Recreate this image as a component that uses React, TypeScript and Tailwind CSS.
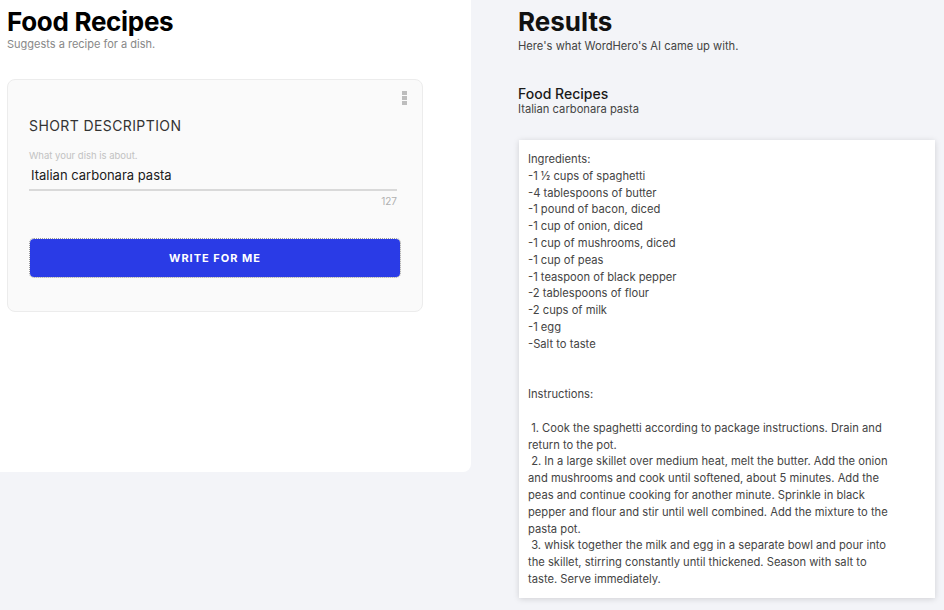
import React from "react";

const recipe = `Ingredients:
-1 ½ cups of spaghetti
-4 tablespoons of butter
-1 pound of bacon, diced
-1 cup of onion, diced
-1 cup of mushrooms, diced
-1 cup of peas
-1 teaspoon of black pepper
-2 tablespoons of flour
-2 cups of milk
-1 egg
-Salt to taste


Instructions:

 1. Cook the spaghetti according to package instructions. Drain and return to the pot.
 2. In a large skillet over medium heat, melt the butter. Add the onion and mushrooms and cook until softened, about 5 minutes. Add the peas and continue cooking for another minute. Sprinkle in black pepper and flour and stir until well combined. Add the mixture to the pasta pot.
 3. whisk together the milk and egg in a separate bowl and pour into the skillet, stirring constantly until thickened. Season with salt to taste. Serve immediately.`;

export default function App() {
  return (
    <div className="w-[944px] h-[610px] overflow-hidden bg-[#f3f4f8] flex font-['Inter',sans-serif]">
      {/* left panel */}
      <div className="w-[471px] h-[472px] bg-white rounded-br-lg shrink-0">
        <div className="pl-[7px] pt-[7px]">
          <h1 className="text-[26px] leading-[30px] font-bold text-black tracking-[-0.3px]">Food Recipes</h1>
          <p className="text-[11px] leading-[14px] text-[#888]">Suggests a recipe for a dish.</p>
        </div>

        <div className="ml-[7px] mt-[28px] w-[416px] h-[233px] bg-[#fafafa] border border-[#ececec] rounded-lg relative">
          <div className="absolute right-[15px] top-[11px] flex flex-col gap-[1px]">
            <span className="w-[5px] h-[4px] bg-[#bdbdbd]" />
            <span className="w-[5px] h-[4px] bg-[#bdbdbd]" />
            <span className="w-[5px] h-[4px] bg-[#bdbdbd]" />
          </div>

          <div className="pl-[21px] pr-[25px] pt-[38px]">
            <h2 className="text-[14px] leading-[16px] text-[#333] tracking-[0.4px]">SHORT DESCRIPTION</h2>
            <div className="mt-[16px] text-[9.5px] leading-[12px] text-[#c2c2c2]">What your dish is about.</div>
            <div className="mt-[5px] pl-[2px] text-[13px] leading-[16px] text-[#1a1a1a]">Italian carbonara pasta</div>
            <div className="mt-[6px] h-[2px] bg-[#d9d9d9]" />
            <div className="mt-[4px] text-right text-[10px] leading-[12px] text-[#b0b0b0]">127</div>
            <button className="mt-[32px] ml-[1px] w-[370px] h-[38px] bg-[#2a3be6] rounded-[4px] outline outline-1 outline-dotted outline-[#9a9a9a] text-white text-[11px] font-bold tracking-[1px]">
              WRITE FOR ME
            </button>
          </div>
        </div>
      </div>

      {/* right panel */}
      <div className="pl-[47px] pt-[7px] flex flex-col">
        <h1 className="text-[26px] leading-[30px] font-bold text-[#111]">Results</h1>
        <p className="mt-[2px] text-[11.2px] leading-[14px] text-[#444]">Here's what WordHero's AI came up with.</p>

        <h3 className="mt-[33px] text-[14px] leading-[16px] font-medium text-[#1a1a1a]">Food Recipes</h3>
        <p className="text-[11.2px] leading-[14px] text-[#444]">Italian carbonara pasta</p>

        <div className="mt-[24px] ml-[1px] w-[416px] h-[458px] bg-white shadow-[0_1px_6px_rgba(0,0,0,0.15)] pl-[9px] pr-[43px] pt-[11px]">
          <div className="whitespace-pre-wrap text-[11.2px] leading-[16.8px] text-[#444]">{recipe}</div>
        </div>
      </div>
    </div>
  );
}
